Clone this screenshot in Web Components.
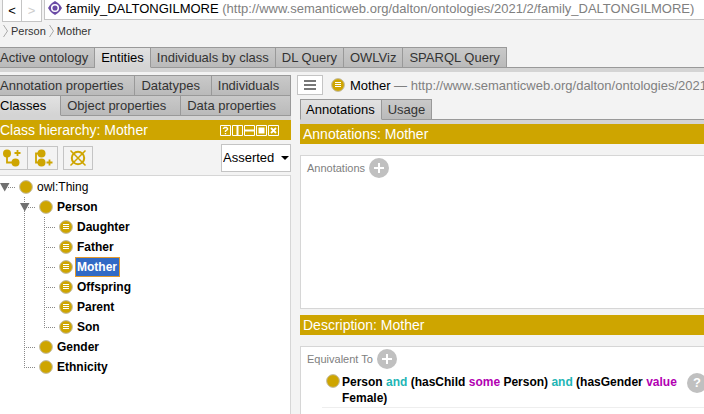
<!DOCTYPE html>
<html lang="en">
<head>
<meta charset="utf-8">
<title>family_DALTONGILMORE</title>
<style>
  html, body { margin: 0; height: 100%; }
  body { background: #f3f3f3; font: 13px/16px "Liberation Sans", Arial, sans-serif; color: #333; overflow: hidden;
    --gold: #cea500; --line: #c4c4c4; --dark: #999; --band: #d4d4d4; }
</style>
</head>
<body>
<ontology-editor></ontology-editor>

<template id="t-editor">
  <style>
    :host { display: flex; flex-direction: column; height: 100vh; overflow: hidden; }
    main { flex: 1; min-height: 0; display: grid; grid-template-columns: minmax(0, 291fr) minmax(0, 407fr); gap: 6px; padding-top: 3px; }
  </style>
  <address-bar></address-bar>
  <crumb-trail></crumb-trail>
  <tab-strip label="Workspace">
    <tab-item flush>Active ontology</tab-item>
    <tab-item selected>Entities</tab-item>
    <tab-item>Individuals by class</tab-item>
    <tab-item>DL Query</tab-item>
    <tab-item>OWLViz</tab-item>
    <tab-item>SPARQL Query</tab-item>
  </tab-strip>
  <main>
    <class-browser></class-browser>
    <entity-details></entity-details>
  </main>
</template>

<template id="t-address">
  <style>
    :host { display: flex; align-items: flex-start; padding-left: 2px; height: 22px; flex: none; }
    button { box-sizing: border-box; width: 20px; height: 22px; padding: 0; background: #fff; border: 1px solid var(--line); border-top: 0; font: 13px/16px "Liberation Sans", Arial, sans-serif; color: #000; }
    button + button { border-left: 0; color: #ccc; }
    p { flex: 1; min-width: 0; margin: 0 0 0 2px; box-sizing: border-box; height: 20px; padding: 1px 0 0 3px; display: flex; gap: 4px; white-space: nowrap; overflow: hidden; background: #fff; border: solid var(--line); border-width: 0 0 1px 1px; color: #000; }
    svg { flex: none; width: 14px; height: 14px; }
    small { font-size: 13px; color: #808080; }
  </style>
  <button aria-label="Back">&lt;</button><button aria-label="Forward">&gt;</button>
  <p>
    <svg viewBox="0 0 14 14" aria-hidden="true"><path d="M7 0l3 2 2 2 2 3-2 3-2 2-3 2-3-2-2-2-2-3 2-3 2-2z" fill="#6a4aa5"/><circle cx="7" cy="7" r="3.3" fill="#6a4aa5" stroke="#fff" stroke-width="1.5"/></svg>
    <span>family_DALTONGILMORE <small>(http://www.semanticweb.org/dalton/ontologies/2021/2/family_DALTONGILMORE)</small></span>
  </p>
</template>

<template id="t-crumbs">
  <style>
    :host { display: block; flex: none; height: 25px; }
    nav { display: flex; gap: 3px; padding: 1px 0 0 3px; font-size: 11px; }
    span { display: flex; gap: 3px; align-items: center; }
    a { color: #333; text-decoration: none; }
    svg { width: 5px; height: 14px; fill: none; stroke: #aaa; }
  </style>
  <nav aria-label="Breadcrumb">
    <span><svg viewBox="0 0 5 14"><path d="M.5 1l4 6-4 6"/></svg><a href="#person">Person</a></span>
    <span><svg viewBox="0 0 5 14"><path d="M.5 1l4 6-4 6"/></svg><a href="#mother">Mother</a></span>
  </nav>
</template>

<template id="t-strip">
  <style>
    :host { display: block; flex: none; }
    div { display: flex; min-height: 21px; box-shadow: inset 0 -1px var(--dark); }
    :host(:not([inner])) div { border-bottom: 4px solid var(--band); }
    :host([inner]) div { min-height: 20px; height: 20px; box-shadow: none; }
  </style>
  <div role="tablist"><slot></slot></div>
</template>

<template id="t-tab">
  <style>
    :host { display: flex; flex: none; }
    :host([grow]) { flex: 1 1 auto; }
    button { flex: 1; box-sizing: border-box; padding: 2px 6px 1px; border: solid var(--dark); border-width: 1px 1px 1px 0; background: linear-gradient(#c9c9c9, #bababa); color: #333; font: 13px/16px "Liberation Sans", Arial, sans-serif; text-align: left; white-space: nowrap; }
    :host([flush]) button { padding-left: 0; }
    :host([edge]) button { border-left-width: 1px; padding-left: 5px; }
    :host([upper]) button { border-bottom-width: 0; }
    :host([selected]) button { background: linear-gradient(#e2e2e2, var(--band)); border-bottom-color: var(--band); color: #000; }
  </style>
  <button role="tab"><slot></slot></button>
</template>

<template id="t-title">
  <style>
    :host { display: flex; flex: none; align-items: center; justify-content: space-between; height: 20px; background: var(--gold); color: #fff; }
    h2 { margin: 0; padding-left: 3px; font: 14px/20px "Liberation Sans", Arial, sans-serif; white-space: nowrap; }
    :host([flush]) h2 { padding-left: 0; }
  </style>
  <h2><slot></slot></h2><slot name="tools"></slot>
</template>

<template id="t-tools">
  <style>
    :host { display: flex; gap: 1px; margin-right: 12px; }
    button { width: 11px; height: 11px; padding: 0; border: 0; background: none; display: block; }
    svg { display: block; width: 11px; height: 11px; fill: none; stroke: #fff; }
  </style>
  <button aria-label="Help"><svg viewBox="0 0 11 11"><path d="M.5.5h10v10H.5z"/><path d="M3.5 4V3.5l1-1h2l1 1v1L5.5 6v1M5.5 8v1.2" stroke-width="1.4"/></svg></button>
  <button aria-label="Split vertically"><svg viewBox="0 0 11 11"><path d="M.5.5h10v10H.5z"/><path d="M5.5 1v9" stroke-width="2"/></svg></button>
  <button aria-label="Split horizontally"><svg viewBox="0 0 11 11"><path d="M.5.5h10v10H.5z"/><path d="M1 5.500h9" stroke-width="2"/></svg></button>
  <button aria-label="Float"><svg viewBox="0 0 11 11"><path d="M.5.5h10v10H.5z"/><path d="M2.500 2.500h6v6h-6z" fill="#fff" stroke="none"/></svg></button>
  <button aria-label="Close"><svg viewBox="0 0 11 11"><path d="M.5.5h10v10H.5z"/><path d="M3 3l5 5M8 3L3 8" stroke-width="1.8"/></svg></button>
</template>

<template id="t-dot">
  <style>
    :host { display: block; flex: none; width: 14px; height: 14px; }
    svg { display: block; }
    path { display: none; }
    :host([defined]) path { display: block; }
  </style>
  <svg width="14" height="14" viewBox="0 0 14 14" aria-hidden="true"><circle cx="7" cy="7" r="6.4" fill="#cea500" stroke="#c3bda8"/><path d="M4 4.500h6M4 6.500h6M4 8.500h6" stroke="#fff"/></svg>
</template>

<template id="t-browser">
  <style>
    :host { display: flex; flex-direction: column; min-height: 0; }
    .bar { display: flex; align-items: flex-start; padding: 4px 0 3px; }
    .bar button { box-sizing: border-box; height: 24px; margin-top: 2px; width: 30px; padding: 0; border: 1px solid var(--line); background: #f3f3f3; display: grid; place-items: center; }
    .bar button:first-child { width: 28px; border-width: 1px 1px 1px 0; justify-items: start; padding-left: 1px; }
    .bar button:nth-child(2) { border-left: 0; }
    .bar button:nth-child(3) { margin-left: 5px; }
    svg { display: block; }
    label { margin-left: auto; box-sizing: border-box; height: 28px; display: flex; align-items: center; border: 1px solid var(--line); background: #fff; padding: 0 1px; }
    select { appearance: none; border: 0; padding: 0; margin: 0; width: 58px; background: none; color: #000; font: 13px/16px "Liberation Sans", Arial, sans-serif; }
    .tree { flex: 1; min-height: 0; background: #fff; border: solid #d6d6d6; border-width: 1px 1px 0 0; padding-top: 1px; overflow: hidden; }
  </style>
  <tab-strip inner label="More entity types">
    <tab-item upper grow flush>Annotation properties</tab-item>
    <tab-item upper grow>Datatypes</tab-item>
    <tab-item upper grow>Individuals</tab-item>
  </tab-strip>
  <tab-strip label="Entity types">
    <tab-item grow flush selected>Classes</tab-item>
    <tab-item grow>Object properties</tab-item>
    <tab-item grow>Data properties</tab-item>
  </tab-strip>
  <panel-title flush>Class hierarchy: Mother<view-tools slot="tools"></view-tools></panel-title>
  <div class="bar">
    <button aria-label="Add subclass"><svg width="20" height="18" viewBox="0 0 20 18"><path d="M6 5v8.500h6M13.500 4h6M16.500 1v6" fill="none" stroke="#cea500" stroke-width="1.800"/><circle cx="6" cy="4.500" r="4" fill="#cea500"/><circle cx="14.500" cy="13.500" r="4" fill="#cea500"/></svg></button>
    <button aria-label="Add sibling class"><svg width="20" height="18" viewBox="0 0 20 18"><path d="M8 4.500H3v9h5M13.500 13.500h6M16.500 10.500v6" fill="none" stroke="#cea500" stroke-width="1.800"/><circle cx="8.500" cy="4.500" r="4" fill="#cea500"/><circle cx="8.500" cy="13.500" r="4" fill="#cea500"/></svg></button>
    <button aria-label="Delete class"><svg width="18" height="18" viewBox="0 0 18 18"><g fill="none" stroke="#cea500"><circle cx="9" cy="9" r="6.200" stroke-width="2"/><path d="M1.500 1.500l15 15M16.500 1.500l-15 15" stroke-width="1.500"/></g></svg></button>
    <label><select aria-label="Hierarchy view"><option>Asserted</option><option>Inferred</option></select><svg width="8" height="4" viewBox="0 0 8 4"><path d="M0 0h8L4 4z"/></svg></label>
  </div>
  <div class="tree" role="tree" aria-label="Class hierarchy">
    <tree-node root open plain name="owl:Thing">
      <tree-node open name="Person">
        <tree-node defined name="Daughter"></tree-node>
        <tree-node defined name="Father"></tree-node>
        <tree-node defined selected name="Mother"></tree-node>
        <tree-node defined name="Offspring"></tree-node>
        <tree-node defined name="Parent"></tree-node>
        <tree-node defined last name="Son"></tree-node>
      </tree-node>
      <tree-node name="Gender"></tree-node>
      <tree-node last name="Ethnicity"></tree-node>
    </tree-node>
  </div>
</template>

<template id="t-node">
  <style>
    :host { display: block; background: repeating-linear-gradient(#888 0 1px, transparent 1px 2px) 4px 0 / 1px 100% no-repeat; }
    :host([last]) { background-size: 1px 11px; }
    :host([root]) { background: none; }
    .row { display: flex; align-items: center; height: 20px; background: repeating-linear-gradient(90deg, #888 0 1px, transparent 1px 2px) 4px 10px / 12px 1px no-repeat; }
    .toggle { width: 19px; flex: none; }
    svg { display: none; }
    :host([open]) svg { display: block; }
    b { box-sizing: border-box; height: 20px; margin-left: 2px; padding: 0 2px 0 1px; border: 1px solid transparent; font: bold 12px/18px "Liberation Sans", Arial, sans-serif; color: #000; }
    :host([plain]) b { font-weight: normal; }
    :host([selected]) b { background: #316ac5; border-color: #e39a2d; color: #fff; }
    .kids { padding-left: 20px; }
  </style>
  <div class="row"><span class="toggle"><svg width="10" height="9" viewBox="0 0 10 9"><path d="M0 0h9.500L4.700 8.500z" fill="#707070"/></svg></span><class-dot></class-dot><b></b></div>
  <div class="kids" role="group"><slot></slot></div>
</template>

<template id="t-details">
  <style>
    :host { display: flex; flex-direction: column; min-height: 0; }
    header { display: flex; align-items: center; height: 20px; white-space: nowrap; overflow: hidden; color: #808080; margin-bottom: 4px; }
    header button { box-sizing: border-box; flex: none; width: 26px; height: 20px; margin-right: 8px; padding: 0; border: 1px solid var(--line); background: #fff; display: grid; place-items: center; }
    header span { padding: 2px 0 0 5px; }
    header b { font-weight: normal; color: #000; }
    .body { margin-left: 3px; flex: 1; min-height: 0; display: flex; flex-direction: column; }
    section { flex: none; box-sizing: border-box; margin-top: 11px; background: #fff; border: solid #d6d6d6; border-width: 1px 0 1px 1px; padding: 2px 0 0 6px; }
    .notes { height: 154px; margin-bottom: 6px; }
    .rest { flex: 1; border-bottom: 0; }
    h3 { display: flex; align-items: center; gap: 4px; margin: 0; font: 11px/20px "Liberation Sans", Arial, sans-serif; color: #808080; }
    .axiom { display: flex; align-items: flex-start; margin: 4px 0 0 15px; border-bottom: 1px solid #eee; padding-bottom: 1px; }
    .axiom p { flex: 1; margin: 0; padding: 1px 8px 0 2px; font: bold 12px/16px "Liberation Sans", Arial, sans-serif; color: #000; }
    .axiom class-dot { margin: 1px 0 0 4px; }
    i { font-style: normal; color: #1fb5b5; }
    em { font-style: normal; color: #b200b2; }
    .axiom round-button { margin-right: -3px; }
  </style>
  <header>
    <button aria-label="Menu"><svg width="12" height="10" viewBox="0 0 12 10"><path d="M0 1h12M0 5h12M0 9h12" stroke="#777" stroke-width="2"/></svg></button>
    <class-dot defined></class-dot>
    <span><b>Mother</b> — http://www.semanticweb.org/dalton/ontologies/2021</span>
  </header>
  <div class="body">
    <tab-strip label="Details"><tab-item edge selected>Annotations</tab-item><tab-item>Usage</tab-item></tab-strip>
    <panel-title>Annotations: Mother</panel-title>
    <section class="notes"><h3>Annotations <round-button label="Add annotation" icon="plus"></round-button></h3></section>
    <panel-title>Description: Mother</panel-title>
    <section class="rest">
      <h3>Equivalent To <round-button label="Add equivalent class" icon="plus"></round-button></h3>
      <div class="axiom"><class-dot></class-dot>
        <p>Person <i>and</i> (hasChild <em>some</em> Person) <i>and</i> (hasGender <em>value</em> Female)</p>
        <round-button label="Explain" icon="help"></round-button>
      </div>
    </section>
  </div>
</template>

<template id="t-round">
  <style>
    :host { display: block; flex: none; }
    button { width: 20px; height: 20px; border: 0; padding: 0; border-radius: 50%; background: #c0c0c0; color: #fff; display: grid; place-items: center; font: bold 13px/20px "Liberation Sans", Arial, sans-serif; }
    svg { display: none; }
    :host([icon="plus"]) svg { display: block; }
  </style>
  <button><svg width="10" height="10" viewBox="0 0 10 10"><path d="M5 0v10M0 5h10" stroke="#fff" stroke-width="2"/></svg><span>?</span></button>
</template>

<script>
  class TemplateElement extends HTMLElement {
    connectedCallback() {
      if (this.shadowRoot) return;
      const source = document.getElementById(this.constructor.source);
      this.attachShadow({ mode: "open" }).append(source.content.cloneNode(true));
      this.ready(this.shadowRoot);
    }
    ready() {}
  }
  const define = (name, source, ready) => customElements.define(name, class extends TemplateElement {
    static source = source;
    ready(root) { if (ready) ready(this, root); }
  });
  define("class-dot", "t-dot");
  define("round-button", "t-round", (el, root) => {
    root.querySelector("button").setAttribute("aria-label", el.getAttribute("label"));
    if (el.getAttribute("icon") === "plus") root.querySelector("span").remove();
  });
  define("tab-item", "t-tab", (el, root) => {
    root.querySelector("button").setAttribute("aria-selected", el.hasAttribute("selected"));
  });
  define("tab-strip", "t-strip", (el, root) => {
    root.querySelector("div").setAttribute("aria-label", el.getAttribute("label"));
  });
  define("view-tools", "t-tools");
  define("panel-title", "t-title");
  define("tree-node", "t-node", (el, root) => {
    el.setAttribute("role", "treeitem");
    root.querySelector("b").textContent = el.getAttribute("name");
    if (el.hasAttribute("defined")) root.querySelector("class-dot").setAttribute("defined", "");
  });
  define("address-bar", "t-address");
  define("crumb-trail", "t-crumbs");
  define("class-browser", "t-browser");
  define("entity-details", "t-details");
  define("ontology-editor", "t-editor");
</script>
</body>
</html>
